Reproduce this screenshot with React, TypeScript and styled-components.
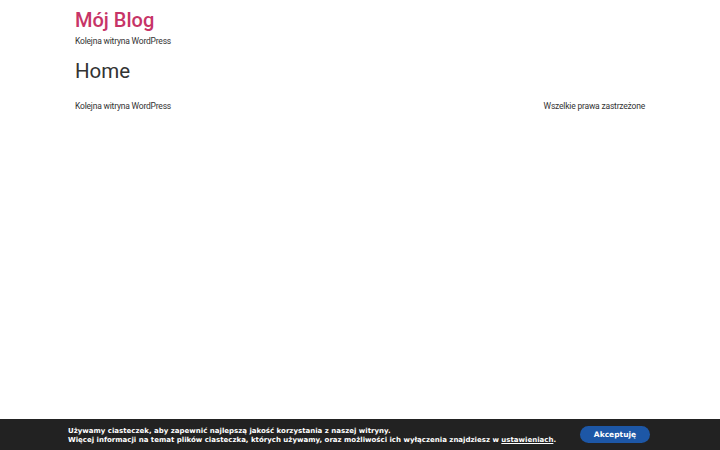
import React from 'react';
import styled, { createGlobalStyle } from 'styled-components';

const GlobalStyle = createGlobalStyle`
	html, body {
		margin: 0;
		padding: 0;
		background: #fff;
	}
	body {
		font-family: Roboto, 'Liberation Sans', sans-serif;
		color: #333;
	}
`;

const Page = styled.div`
	min-height: 450px;
`;

const Container = styled.div`
	max-width: 570px;
	margin: 0 auto;
`;

const Header = styled.header`
	padding-top: 8px;
`;

const SiteTitle = styled.a`
	display: block;
	font-size: 20px;
	line-height: 24px;
	font-weight: 500;
	color: #c73467;
	text-decoration: none;
`;

const SmallText = styled.span`
	font-size: 8.5px;
	line-height: 12px;
	letter-spacing: -0.2px;
	color: #333;
`;

const Tagline = styled(SmallText).attrs({ as: 'p' })`
	display: block;
	margin: 3px 0 0;
`;

const PageTitle = styled.h1`
	margin: 12px 0 0;
	font-size: 20.5px;
	line-height: 24px;
	font-weight: 400;
	color: #333;
`;

const Footer = styled.footer`
	display: flex;
	justify-content: space-between;
	align-items: center;
	margin-top: 17px;
`;

const CookieBar = styled.div`
	position: fixed;
	left: 0;
	right: 0;
	bottom: 0;
	height: 31px;
	background: #222;
	display: flex;
	align-items: center;
	padding: 2px 70px 0 68px;
	box-sizing: border-box;
	gap: 20px;
`;

const CookieText = styled.p`
	flex: 1;
	margin: 0;
	font-family: 'DejaVu Sans', sans-serif;
	font-weight: 700;
	font-size: 7px;
	line-height: 9px;
	color: #fff;

	a {
		color: #fff;
		text-decoration: underline;
	}
`;

const AcceptButton = styled.button`
	flex: none;
	width: 70px;
	height: 17px;
	margin-top: -2px;
	border: 0;
	border-radius: 9px;
	background: #1d57a6;
	color: #fff;
	font-family: 'DejaVu Sans', sans-serif;
	font-weight: 700;
	font-size: 7.5px;
	cursor: pointer;
`;

export default function App() {
	return (
		<Page>
			<GlobalStyle />
			<Container>
				<Header>
					<SiteTitle href="#">Mój Blog</SiteTitle>
					<Tagline>Kolejna witryna WordPress</Tagline>
				</Header>
				<PageTitle>Home</PageTitle>
				<Footer>
					<SmallText>Kolejna witryna WordPress</SmallText>
					<SmallText>Wszelkie prawa zastrzeżone</SmallText>
				</Footer>
			</Container>
			<CookieBar>
				<CookieText>
					Używamy ciasteczek, aby zapewnić najlepszą jakość korzystania z naszej witryny.
					<br />
					Więcej informacji na temat plików ciasteczka, których używamy, oraz możliwości ich wyłączenia znajdziesz w <a href="#">ustawieniach</a>.
				</CookieText>
				<AcceptButton>Akceptuję</AcceptButton>
			</CookieBar>
		</Page>
	);
}
